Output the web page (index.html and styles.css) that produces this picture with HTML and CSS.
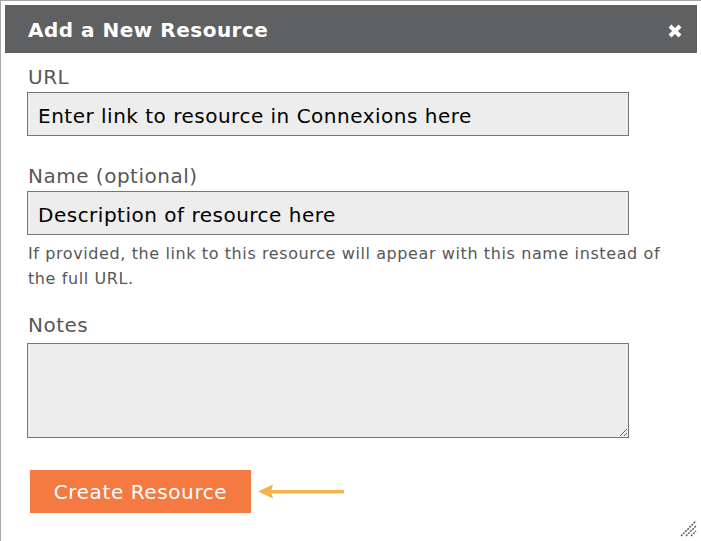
FILE: index.html
```html
<!DOCTYPE html>
<html>
<head>
<meta charset="utf-8">
<link rel="stylesheet" href="styles.css">
</head>
<body>
<div class="dialog">
  <div class="titlebar">
    <span class="title">Add a New Resource</span>
    <svg class="close" width="14" height="14" viewBox="0 0 14 14"><path d="M2 2 L12 12 M12 2 L2 12" stroke="#fff" stroke-width="4" stroke-linecap="butt"/></svg>
  </div>
  <form class="form">
    <label class="label label-first">URL</label>
    <input class="field" type="text" value="Enter link to resource in Connexions here">
    <label class="label">Name (optional)</label>
    <input class="field" type="text" value="Description of resource here">
    <p class="help">If provided, the link to this resource will appear with this name instead of the full URL.</p>
    <label class="label label-notes">Notes</label>
    <textarea class="notes"></textarea>
    <div class="actions">
      <button type="button" class="create">Create Resource</button>
      <svg class="arrow" width="88" height="20" viewBox="0 0 88 20">
        <path d="M14 10.5 H86" stroke="#c8c0b0" stroke-width="3" opacity="0.5"/>
        <path d="M13 9.5 H86" stroke="#f3b24a" stroke-width="3"/>
        <path d="M0 9.5 L15 2.5 L13 9.5 L15 16.5 Z" fill="#f3b24a"/>
      </svg>
    </div>
  </form>
  <svg class="grip" width="17" height="17" viewBox="0 0 17 17">
    <path d="M1 16 L16 1 M6 16 L16 6 M11 16 L16 11" stroke="#555" stroke-width="1.4" stroke-dasharray="2 1"/>
  </svg>
</div>
</body>
</html>
```
FILE: styles.css
```css
html, body {
  margin: 0;
  padding: 0;
  background: #fff;
  overflow: hidden;
}
body {
  width: 701px;
  height: 541px;
  font-family: "DejaVu Sans", Verdana, sans-serif;
}
.dialog {
  position: relative;
  box-sizing: border-box;
  width: 702px;
  min-height: 560px;
  border: 1px solid #a8a8a8;
  border-bottom: none;
  padding: 4px;
  background: #fff;
}
.titlebar {
  height: 48px;
  background: #5f6062;
  display: flex;
  align-items: center;
  justify-content: space-between;
  padding: 0 15px 0 23px;
}
.title {
  color: #fff;
  font-weight: bold;
  font-size: 20px;
  line-height: 24px;
  letter-spacing: 0.5px;
  margin-top: 1px;
}
.close {
  display: block;
  margin-top: 4px;
}
.form {
  display: flex;
  flex-direction: column;
  align-items: flex-start;
  padding: 0 0 0 22px;
  margin: 0;
}
.label {
  color: #575757;
  font-size: 20px;
  line-height: 24px;
  letter-spacing: 0.5px;
  margin: 28px 0 3px 1px;
}
.label-first {
  margin-top: 12px;
}
.label-notes {
  margin-top: 22px;
  margin-bottom: 6px;
}
.field {
  box-sizing: border-box;
  width: 602px;
  height: 44px;
  margin: 0;
  padding: 11px 10px 8px 10px;
  border: 1px solid #767676;
  border-radius: 0;
  background: #ededed;
  color: #000;
  font-family: "DejaVu Sans", Verdana, sans-serif;
  font-size: 20px;
  line-height: 23px;
  letter-spacing: 0.5px;
  outline: none;
}
.help {
  margin: 6px 0 0 1px;
  color: #575757;
  font-size: 16px;
  line-height: 25px;
  letter-spacing: 0.6px;
  width: 650px;
}
.notes {
  box-sizing: border-box;
  width: 602px;
  height: 95px;
  margin: 0;
  border: 1px solid #767676;
  border-radius: 0;
  background: #ededed;
  font-family: "DejaVu Sans", Verdana, sans-serif;
  font-size: 16px;
  resize: both;
}
.actions {
  display: flex;
  align-items: center;
  gap: 7px;
  margin: 32px 0 0 3px;
}
.create {
  width: 221px;
  height: 43px;
  padding: 0;
  border: none;
  border-radius: 0;
  background: #f47a42;
  color: #fff;
  font-family: "DejaVu Sans", Verdana, sans-serif;
  font-size: 20px;
  line-height: 24px;
  letter-spacing: 0.6px;
}
.arrow {
  display: block;
}
.grip {
  position: absolute;
  left: 679px;
  top: 519px;
}
```
